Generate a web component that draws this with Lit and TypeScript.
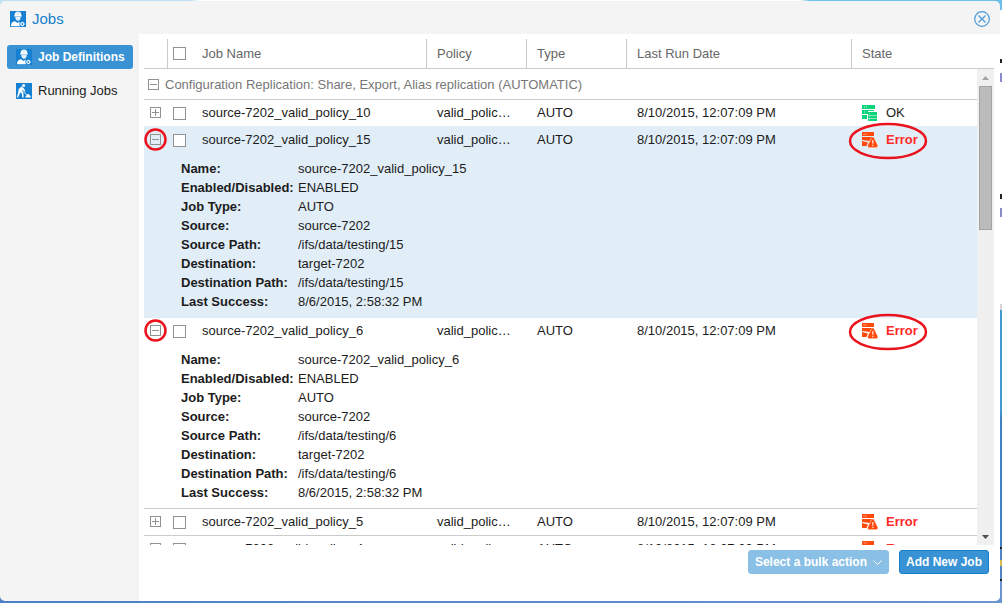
import { LitElement, html, svg, css, nothing } from "lit";
import { customElement, property, state } from "lit/decorators.js";

interface Job {
  name: string;
  id: string;
  state: "OK" | "Error";
  open?: boolean;
  selected?: boolean;
  marked?: boolean;
}

const RUN_DATE = "8/10/2015, 12:07:09 PM";

const JOBS: Job[] = [
  { name: "source-7202_valid_policy_10", id: "10", state: "OK" },
  { name: "source-7202_valid_policy_15", id: "15", state: "Error", open: true, selected: true, marked: true },
  { name: "source-7202_valid_policy_6", id: "6", state: "Error", open: true, marked: true },
  { name: "source-7202_valid_policy_5", id: "5", state: "Error" },
  { name: "source-7202_valid_policy_4", id: "4", state: "Error" },
];

const details = (job: Job): [string, string][] => [
  ["Name:", job.name],
  ["Enabled/Disabled:", "ENABLED"],
  ["Job Type:", "AUTO"],
  ["Source:", "source-7202"],
  ["Source Path:", `/ifs/data/testing/${job.id}`],
  ["Destination:", "target-7202"],
  ["Destination Path:", `/ifs/data/testing/${job.id}`],
  ["Last Success:", "8/6/2015, 2:58:32 PM"],
];

const workerIcon = html`<svg width="16" height="16" viewBox="0 0 16 16" aria-hidden="true">
  <rect width="16" height="16" fill="#1680d2" />
  <path d="M4.600 4.400C4.600 2 5.800.600 8 .600s3.400 1.400 3.400 3.800l.5.3v.8H4.100v-.8z" fill="#fff" />
  <path d="M5.200 5.500h5.600c0 2.400-1 4.200-2.800 4.200S5.200 7.900 5.200 5.500z" fill="#e4f1fa" />
  <path d="M1 15.200c0-3.200 1.200-4.400 4-4.900l2.700 1.600 1.900-1.300.8 4.600z" fill="#fff" />
  <path d="M7.200 1v2.800M8.800 1v2.800" stroke="#8cc1ea" stroke-width=".5" />
  <path d="M5 5.600h6" stroke="#8cc1ea" stroke-width=".5" />
  <circle cx="12.400" cy="13" r="3" fill="#1680d2" />
  <circle cx="12.400" cy="13" r="1.500" fill="none" stroke="#fff" stroke-width="1.200" />
  <path d="M12.400 10.600v4.800M10 13h4.800" stroke="#fff" stroke-width=".6" stroke-dasharray="1 2.800" />
</svg>`;

const diggerIcon = html`<svg width="16" height="16" viewBox="0 0 16 16" aria-hidden="true">
  <rect width="16" height="16" fill="#1680d2" />
  <circle cx="7.600" cy="2.600" r="1.500" fill="#fff" />
  <path d="M2.600 6.200L5.400 3.400 7.500 5l1.800 2.800-.7.700-2-2L6 7.600l1.400 2.200.2 4.700H6.200l-.3-3.800-1.700-1.400-.7 2.300-1.600 2.900H.7L2 10.600z" fill="#fff" />
  <path d="M5.500 5.500l5.800 7.300" stroke="#fff" stroke-width=".8" />
  <path d="M9.300 14.600c.3-1.600 1.200-1.500 1.700-2.800.9-1.300 1.800-1 2.400.3.900.5 1.400 1.400 1.600 2.500z" fill="#fff" />
</svg>`;

const okIcon = html`<svg width="16" height="16" viewBox="0 0 16 16" aria-hidden="true">
  <path d="M0 0h13v4H0zM0 5h12v1H6v3H0zM0 10h5v4H0z" fill="#0bd37c" />
  <path d="M2 2h1M4 2h1M2 7h1" stroke="#fff" stroke-width=".8" />
  <path d="M6 7h9v3H6zM6 10.500h9V13H6zM6 13.500h9V16H6z" fill="#0bd37c" />
  <path d="M7 8.500h1M7 11.800h1M7 14.800h1" stroke="#fff" stroke-width=".5" />
</svg>`;

const errorIcon = html`<svg width="16" height="16" viewBox="0 0 16 16" aria-hidden="true">
  <path d="M0 0h12v4H0zM0 5h12v1.500L7.500 9 0 8zM0 9l6 1.500L4.500 14H0z" fill="#ff4a0b" />
  <path d="M1.500 2h1M3.500 2h1" stroke="#fff" stroke-width=".8" />
  <path d="M10.800 5c.6 0 1 .3 1.300.8l3.600 7.200c.6 1.500-.2 2.700-1.500 2.700H7.300c-1.300 0-2-1.200-1.500-2.700l3.700-7.200c.3-.5.700-.8 1.300-.8z" fill="#ff4a0b" stroke="#fff" stroke-width=".5" />
  <path d="M10.200 8.200h1.300l-.2 3.600h-.9zM10.300 12.800h1.100v1.200h-1.100z" fill="#fff" />
</svg>`;

const toggleGlyph = (open: boolean) => html`<svg width="11" height="11" viewBox="0 0 11 11" aria-hidden="true">
  <rect x=".5" y=".5" width="10" height="10" fill="none" stroke="#919191" />
  <path d="M2 5.500h7" stroke="#919191" />
  ${open ? nothing : svg`<path d="M5.500 2v7" stroke="#919191" />`}
</svg>`;

@customElement("job-grid")
export class JobGrid extends LitElement {
  @property({ attribute: false }) jobs: Job[] = [];

  static styles = css`
    :host { display: flex; flex-direction: column; flex: 1; min-height: 0; }
    table { width: 100%; table-layout: fixed; border-collapse: separate; border-spacing: 0; }
    .c-toggle, .c-check { width: 24px; }
    .c-name { width: 235px; }
    .c-policy, .c-type { width: 100px; }
    .c-date { width: 225px; }
    th, td { padding: 0 0 0 10px; text-align: left; font-weight: normal; box-sizing: border-box; }
    .head { border-bottom: 1px solid #cbcbcb; color: #666; }
    .head th { height: 29px; border-right: 1px solid #cbcbcb; }
    .head th:last-child, .head .pick { border-right: 0; }
    th.pick, td.pick { padding: 0 0 0 5px; }
    .box {
      appearance: none; display: block; width: 13px; height: 13px; margin: 0;
      border: 1px solid #919191; border-radius: 0; background: #fff;
    }
    .box:checked { background: #3892d3; }
    .scroller { display: flex; flex: 1; min-height: 0; }
    .view { flex: 1; min-width: 0; overflow: hidden; }
    .toggle { display: block; padding: 0; border: 0; background: none; line-height: 0; cursor: pointer; }
    .group td { height: 31px; padding: 1px 0 0 4px; border-bottom: 1px solid #cbcbcb; color: #777; }
    .group-label { display: flex; align-items: center; gap: 6px; }
    .row td { height: 27px; border-bottom: 1px solid #cbcbcb; color: #1c1c1c; }
    .row.open td { height: 26px; border-bottom: 0; }
    .row td.fold { position: relative; padding: 0 0 1px 6px; }
    .row td.cut { padding-right: 10px; overflow: hidden; text-overflow: ellipsis; white-space: nowrap; }
    .row td.state { position: relative; }
    .status { display: flex; align-items: center; gap: 8px; }
    .bad { color: #ff2a2a; font-weight: bold; }
    .more td { height: 165px; padding: 6px 0 6px 37px; border-bottom: 1px solid #cbcbcb; color: #1c1c1c; }
    .selected td { background: #e1eef8; border-bottom-color: #e1eef8; }
    .before-selected td { border-bottom-color: #e1eef8; }
    dl { display: grid; grid-template-columns: 117px 1fr; margin: 0; line-height: 19px; }
    dt { font-weight: bold; white-space: nowrap; }
    dd { margin: 0; }
    .ring { position: absolute; top: 0; left: -1px; pointer-events: none; z-index: 1; }
    .oval { position: absolute; top: -5px; left: -4px; pointer-events: none; z-index: 1; }
    .bar { display: flex; flex-direction: column; width: 17px; background: #f0f0f0; }
    .arrow { display: flex; align-items: center; justify-content: center; height: 17px; padding: 0; border: 0; background: none; }
    .thumb { height: 144px; margin: 0 2px; box-sizing: border-box; border: 1px solid #a3a3a3; background: #bbb; }
    .arrow.down { margin-top: auto; }
  `;

  private columns() {
    return html`<colgroup>
      <col class="c-toggle" /><col class="c-check" /><col class="c-name" /><col class="c-policy" />
      <col class="c-type" /><col class="c-date" /><col />
    </colgroup>`;
  }

  private flip(job: Job) {
    job.open = !job.open;
    this.requestUpdate();
  }

  private row(job: Job, next?: Job) {
    const tone = job.selected ? "selected" : next?.selected ? "before-selected" : "";
    return html`
      <tr class="row ${tone} ${job.open ? "open" : ""}">
        <td class="fold">
          <button class="toggle" aria-label="Details of ${job.name}" aria-expanded=${job.open ? "true" : "false"} @click=${() => this.flip(job)}>
            ${toggleGlyph(!!job.open)}
          </button>
          ${job.marked
            ? html`<svg class="ring" width="25" height="25" viewBox="0 0 25 25" aria-hidden="true">
                <circle cx="12.500" cy="12.500" r="10" fill="none" stroke="#ea121c" stroke-width="2.500" />
              </svg>`
            : nothing}
        </td>
        <td class="pick"><input class="box" type="checkbox" aria-label="Select ${job.name}" /></td>
        <td>${job.name}</td>
        <td class="cut">valid_policy_${job.id}</td>
        <td>AUTO</td>
        <td>${RUN_DATE}</td>
        <td class="state">
          <span class="status ${job.state === "Error" ? "bad" : ""}">
            ${job.state === "Error" ? errorIcon : okIcon}<span>${job.state}</span>
          </span>
          ${job.marked
            ? html`<svg class="oval" width="82" height="38" viewBox="0 0 82 38" aria-hidden="true">
                <ellipse cx="40" cy="19" rx="38" ry="17" fill="none" stroke="#ea121c" stroke-width="2.500" />
              </svg>`
            : nothing}
        </td>
      </tr>
      ${job.open
        ? html`<tr class="more ${tone}">
            <td colspan="7">
              <dl>${details(job).map(([label, value]) => html`<dt>${label}</dt><dd>${value}</dd>`)}</dl>
            </td>
          </tr>`
        : nothing}
    `;
  }

  render() {
    return html`
      <table class="head">
        ${this.columns()}
        <thead>
          <tr>
            <th></th>
            <th class="pick"><input class="box" type="checkbox" aria-label="Select all jobs" /></th>
            <th>Job Name</th>
            <th>Policy</th>
            <th>Type</th>
            <th>Last Run Date</th>
            <th>State</th>
          </tr>
        </thead>
      </table>
      <div class="scroller">
        <div class="view">
          <table>
            ${this.columns()}
            <tbody>
              <tr class="group">
                <td colspan="7">
                  <div class="group-label">
                    <button class="toggle" aria-label="Collapse group" aria-expanded="true">${toggleGlyph(true)}</button>
                    <span>Configuration Replication: Share, Export, Alias replication (AUTOMATIC)</span>
                  </div>
                </td>
              </tr>
              ${this.jobs.map((job, i) => this.row(job, this.jobs[i + 1]))}
            </tbody>
          </table>
        </div>
        <div class="bar">
          <button class="arrow" aria-label="Scroll up">
            <svg width="7" height="4" viewBox="0 0 7 4"><path d="M0 4L3.500 0 7 4z" fill="#a3a3a3" /></svg>
          </button>
          <div class="thumb"></div>
          <button class="arrow down" aria-label="Scroll down">
            <svg width="7" height="4" viewBox="0 0 7 4"><path d="M0 0l3.500 4L7 0z" fill="#505050" /></svg>
          </button>
        </div>
      </div>
    `;
  }
}

@customElement("app-root")
export class AppRoot extends LitElement {
  @state() private tab = "definitions";

  static styles = css`
    :host {
      display: flex; height: 100vh; box-sizing: border-box; padding: 1px 2px 2px 0;
      font: 13px/16px "Liberation Sans", Arial, sans-serif; color: #1c1c1c;
      background:
        linear-gradient(90deg, #bfe0f2 0 190px, #fff 200px 800px, #6fc0e8 810px) top / 100% 5px no-repeat,
        linear-gradient(90deg, #4c7fc6, #6b93d0) bottom / 100% 5px no-repeat,
        linear-gradient(
          #6fc0e8 10px, #fff 10px 59px, #222 59px 63px, #fff 63px 73px, #8a8ac8 73px 82px, #fff 82px 194px,
          #222 194px 199px, #fff 199px 208px, #8a8ac8 208px 217px, #fff 217px 304px, #d5d5d5 304px 310px,
          #3f9ad4 310px 410px, #4080c4 420px 547px, #222 547px 549px, #5085c8 549px 560px, #d8bc48 560px 566px,
          #5085c8 566px 579px, #222 579px 581px, #6b93d0 581px
        );
    }
    .window { display: flex; flex-direction: column; flex: 1; min-width: 0; border-radius: 5px; background: #f4f4f4; overflow: hidden; }
    .title { display: flex; align-items: center; gap: 6px; height: 33px; padding: 3px 10px 0 10px; box-sizing: border-box; }
    h1 { flex: 1; margin: 0; font-size: 15px; line-height: 18px; font-weight: normal; color: #157fcc; }
    .close { padding: 0; border: 0; background: none; line-height: 0; cursor: pointer; }
    .body { display: flex; flex: 1; min-height: 0; }
    nav { display: flex; flex-direction: column; gap: 10px; width: 139px; padding: 11px 6px 0 7px; box-sizing: border-box; }
    .tab {
      display: flex; align-items: center; gap: 6px; height: 24px; padding: 0 0 0 9px; border: 0; border-radius: 3px;
      background: none; font: inherit; color: #1c1c1c; white-space: nowrap; cursor: pointer;
    }
    .tab.active { background: #3892d3; color: #fff; font-weight: bold; font-size: 12px; }
    main { display: flex; flex-direction: column; flex: 1; min-width: 0; padding: 5px 6px 0 5px; background: #fff; }
    footer { display: flex; justify-content: flex-end; gap: 10px; padding: 5px 5px 27px; }
    .btn {
      display: flex; align-items: center; gap: 6px; height: 24px; padding: 0 6px; box-sizing: border-box;
      border: 1px solid #157fcc; border-radius: 3px; background: #3892d3;
      font: bold 12px/16px "Liberation Sans", Arial, sans-serif; color: #fff; white-space: nowrap;
    }
    .btn.off { border-color: #8bc0e6; background: #8bc0e6; }
  `;

  render() {
    const tab = (id: string, icon: unknown, label: string) => html`
      <button class="tab ${this.tab === id ? "active" : ""}" @click=${() => (this.tab = id)}>${icon}<span>${label}</span></button>
    `;
    return html`
      <div class="window">
        <header class="title">
          ${workerIcon}
          <h1>Jobs</h1>
          <button class="close" aria-label="Close">
            <svg width="16" height="16" viewBox="0 0 16 16" fill="none" stroke="#4a98d6">
              <circle cx="8" cy="8" r="7.300" stroke-width="1.200" />
              <path d="M4.500 4.500l7 7M11.500 4.500l-7 7" stroke-width="1.200" />
            </svg>
          </button>
        </header>
        <div class="body">
          <nav>
            ${tab("definitions", workerIcon, "Job Definitions")}
            ${tab("running", diggerIcon, "Running Jobs")}
          </nav>
          <main>
            <job-grid .jobs=${JOBS}></job-grid>
            <footer>
              <button class="btn off" disabled>
                <span>Select a bulk action</span>
                <svg width="9" height="5" viewBox="0 0 9 5" fill="none" stroke="#fff"><path d="M.5.500l4 4 4-4" /></svg>
              </button>
              <button class="btn">Add New Job</button>
            </footer>
          </main>
        </div>
      </div>
    `;
  }
}
